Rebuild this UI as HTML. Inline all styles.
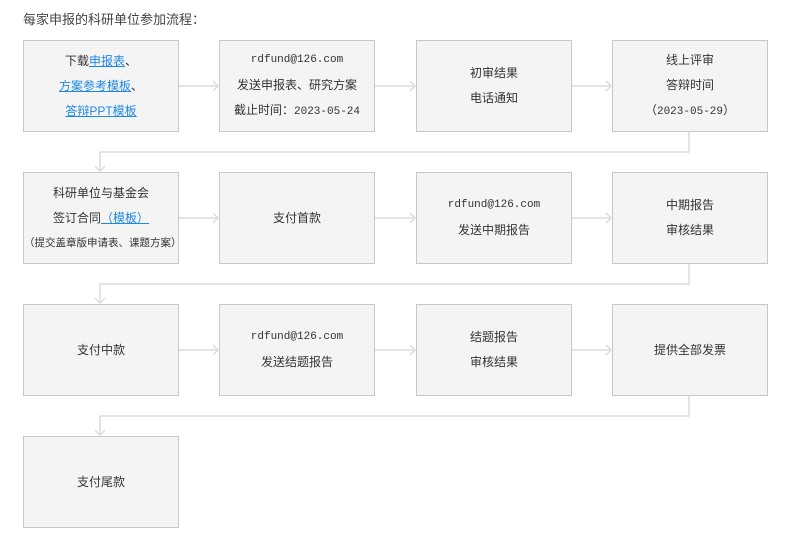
<!DOCTYPE html>
<html><head><meta charset="utf-8"><style>
body{margin:0;width:800px;height:553px;background:#fff;font-family:"Liberation Sans","Noto Sans CJK SC",sans-serif;color:#333;position:relative;overflow:hidden}
.t{position:absolute;left:23px;top:9px;font-size:13px;color:#444}
.b{position:absolute;width:154px;height:90px;background:#f4f4f4;border:1px solid #c8c8c8;display:flex;flex-direction:column;justify-content:center;align-items:center;font-size:12px;line-height:25px;text-align:center;color:#333}
.m{font-family:"Liberation Mono","Noto Sans CJK SC",monospace;font-size:11px}
a{color:#1e88e5;text-decoration:underline}
.s{font-size:10.5px}
svg{position:absolute;left:0;top:0}
</style></head><body>
<div class="t">每家申报的科研单位参加流程：</div>
<svg width="800" height="553" fill="none" stroke="#dcdcdc" stroke-width="1.5">
<g id="h">
<path d="M179 86H218M213 81l5 5-5 5"/><path d="M375 86H415M410 81l5 5-5 5"/><path d="M572 86H611M606 81l5 5-5 5"/>
</g>
<use href="#h" y="132"/><use href="#h" y="264"/>
<path d="M689 132V152H100V171M95 166l5 5 5-5"/>
<path d="M689 264V284H100V303M95 298l5 5 5-5"/>
<path d="M689 396V416H100V435M95 430l5 5 5-5"/>
</svg>
<div class="b" style="left:23px;top:40px"><div>下载<a>申报表</a>、</div><div><a>方案参考模板</a>、</div><div><a>答辩PPT模板</a></div></div>
<div class="b" style="left:219px;top:40px"><div class="m">rdfund@126.com</div><div>发送申报表、研究方案</div><div>截止时间：<span class="m">2023-05-24</span></div></div>
<div class="b" style="left:416px;top:40px"><div>初审结果</div><div>电话通知</div></div>
<div class="b" style="left:612px;top:40px"><div>线上评审</div><div>答辩时间</div><div>（<span class="m">2023-05-29</span>）</div></div>
<div class="b" style="left:23px;top:172px"><div>科研单位与基金会</div><div>签订合同<a>（模板）</a></div><div class="s">（提交盖章版申请表、课题方案）</div></div>
<div class="b" style="left:219px;top:172px"><div>支付首款</div></div>
<div class="b" style="left:416px;top:172px"><div class="m">rdfund@126.com</div><div>发送中期报告</div></div>
<div class="b" style="left:612px;top:172px"><div>中期报告</div><div>审核结果</div></div>
<div class="b" style="left:23px;top:304px"><div>支付中款</div></div>
<div class="b" style="left:219px;top:304px"><div class="m">rdfund@126.com</div><div>发送结题报告</div></div>
<div class="b" style="left:416px;top:304px"><div>结题报告</div><div>审核结果</div></div>
<div class="b" style="left:612px;top:304px"><div>提供全部发票</div></div>
<div class="b" style="left:23px;top:436px"><div>支付尾款</div></div>
</body></html>
